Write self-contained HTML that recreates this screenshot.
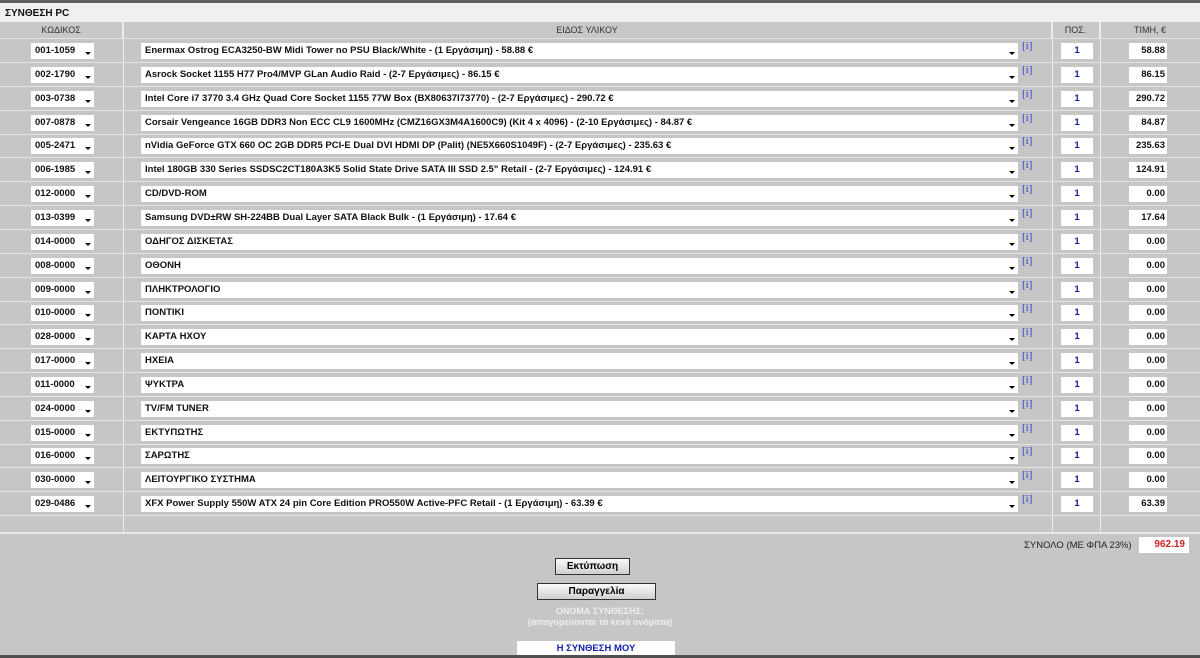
<!DOCTYPE html>
<html><head><meta charset="utf-8"><style>
*{margin:0;padding:0;box-sizing:border-box}
body{width:1200px;height:658px;background:#c6c6c6;font-family:"Liberation Sans",Tahoma,sans-serif;position:relative;overflow:hidden}
.top{position:absolute;left:0;top:0;width:1200px;height:3px;background:#606060}
.bot{position:absolute;left:0;top:655px;width:1200px;height:3px;background:#505050}
.title{position:absolute;left:0;top:3px;width:1200px;height:19px;background:#f0f0f0;font-size:10px;font-weight:bold;padding:5px 0 0 5px;color:#111}
.hdr{position:absolute;top:22px;height:17px;background:#c8c8c8;font-size:9px;color:#333;text-align:center;padding-top:3px;border-right:1px solid #eee}
.row{position:absolute;left:0;width:1200px;height:24px;border-bottom:1px solid #e4e4e4}
.vl{position:absolute;top:22px;height:511px;width:1px;background:#ececec}
.box{position:absolute;top:4px;height:16px;background:#fff;font-size:9.5px;font-weight:bold;color:#111;padding:2px 0 0 4px;white-space:nowrap;overflow:hidden}
.arr{position:absolute;top:13px;width:0;height:0;border-left:3px solid transparent;border-right:3px solid transparent;border-top:3px solid #000}
.i{position:absolute;top:1px;left:1022px;font-size:11px;color:#3344cc;font-family:"Liberation Serif",serif}
.q{left:1061px;width:32px;text-align:center;padding-left:0;color:#112299}
.p{left:1129px;width:38px;text-align:right;padding-right:2px}
</style></head><body>
<div class="top"></div>
<div class="title">ΣΥΝΘΕΣΗ PC</div>
<div class="hdr" style="left:0;width:123px">ΚΩΔΙΚΟΣ</div>
<div class="hdr" style="left:123px;width:929px">ΕΙΔΟΣ ΥΛΙΚΟΥ</div>
<div class="hdr" style="left:1052px;width:48px">ΠΟΣ.</div>
<div class="hdr" style="left:1100px;width:100px;border-right:none">ΤΙΜΗ, €</div>
<div style="position:absolute;left:0;top:38px;width:1200px;height:1px;background:#e4e4e4"></div>
<div id="rows"></div>
<div style="position:absolute;left:0;top:532px;width:1200px;height:2px;background:#e8e8e8"></div>
<div class="vl" style="left:123px"></div><div class="vl" style="left:1052px"></div><div class="vl" style="left:1100px"></div>
<div style="position:absolute;left:1024px;top:540px;font-size:9.5px;color:#222">ΣΥΝΟΛΟ (ΜΕ ΦΠΑ 23%)</div>
<div style="position:absolute;left:1139px;top:537px;width:50px;height:16px;background:#fff;color:#cc2222;font-size:10px;font-weight:bold;text-align:right;padding:2px 4px 0 0">962.19</div>
<div style="position:absolute;left:555px;top:558px;width:75px;height:17px;background:linear-gradient(#fafafa,#d0d0d0);border:1px solid #333;font-size:10px;font-weight:bold;text-align:center;padding-top:2px">Εκτύπωση</div>
<div style="position:absolute;left:537px;top:583px;width:119px;height:17px;background:linear-gradient(#fafafa,#d0d0d0);border:1px solid #333;font-size:10px;font-weight:bold;text-align:center;padding-top:2px">Παραγγελία</div>
<div style="position:absolute;left:450px;top:606px;width:300px;text-align:center;font-size:9px;font-weight:bold;color:#eee;line-height:11px">ΟΝΟΜΑ ΣΥΝΘΕΣΗΣ:<br>(απαγορεύονται τα κενά ονόματα)</div>
<div style="position:absolute;left:517px;top:641px;width:158px;height:14px;background:#fff;color:#1122aa;font-size:9.5px;font-weight:bold;text-align:center;padding-top:2px">Η ΣΥΝΘΕΣΗ ΜΟΥ</div>
<div class="bot"></div>
<script>
var d=[["001-1059","Enermax Ostrog ECA3250-BW Midi Tower no PSU Black/White - (1 Εργάσιμη) - 58.88 €","58.88"],
["002-1790","Asrock Socket 1155 H77 Pro4/MVP GLan Audio Raid - (2-7 Εργάσιμες) - 86.15 €","86.15"],
["003-0738","Intel Core i7 3770 3.4 GHz Quad Core Socket 1155 77W Box (BX80637I73770) - (2-7 Εργάσιμες) - 290.72 €","290.72"],
["007-0878","Corsair Vengeance 16GB DDR3 Non ECC CL9 1600MHz (CMZ16GX3M4A1600C9) (Kit 4 x 4096) - (2-10 Εργάσιμες) - 84.87 €","84.87"],
["005-2471","nVidia GeForce GTX 660 OC 2GB DDR5 PCI-E Dual DVI HDMI DP (Palit) (NE5X660S1049F) - (2-7 Εργάσιμες) - 235.63 €","235.63"],
["006-1985","Intel 180GB 330 Series SSDSC2CT180A3K5 Solid State Drive SATA III SSD 2.5\" Retail - (2-7 Εργάσιμες) - 124.91 €","124.91"],
["012-0000","CD/DVD-ROM","0.00"],
["013-0399","Samsung DVD±RW SH-224BB Dual Layer SATA Black Bulk - (1 Εργάσιμη) - 17.64 €","17.64"],
["014-0000","ΟΔΗΓΟΣ ΔΙΣΚΕΤΑΣ","0.00"],["008-0000","ΟΘΟΝΗ","0.00"],["009-0000","ΠΛΗΚΤΡΟΛΟΓΙΟ","0.00"],
["010-0000","ΠΟΝΤΙΚΙ","0.00"],["028-0000","ΚΑΡΤΑ ΗΧΟΥ","0.00"],["017-0000","ΗΧΕΙΑ","0.00"],
["011-0000","ΨΥΚΤΡΑ","0.00"],["024-0000","TV/FM TUNER","0.00"],["015-0000","ΕΚΤΥΠΩΤΗΣ","0.00"],
["016-0000","ΣΑΡΩΤΗΣ","0.00"],["030-0000","ΛΕΙΤΟΥΡΓΙΚΟ ΣΥΣΤΗΜΑ","0.00"],
["029-0486","XFX Power Supply 550W ATX 24 pin Core Edition PRO550W Active-PFC Retail - (1 Εργάσιμη) - 63.39 €","63.39"]];
var h="";
d.forEach(function(r,i){var t=(39+i*23.85).toFixed(2);
h+='<div class="row" style="top:'+t+'px"><div class="box" style="left:31px;width:63px">'+r[0]+'</div><div class="arr" style="left:85px"></div>'+
'<div class="box" style="left:141px;width:877px">'+r[1]+'</div><div class="arr" style="left:1009px"></div><div class="i">[i]</div>'+
'<div class="box q">1</div><div class="box p">'+r[2]+'</div></div>';});
h+='<div class="row" style="top:516px;height:17px;border:none"></div>';
document.getElementById("rows").innerHTML=h;
</script>
</body></html>
